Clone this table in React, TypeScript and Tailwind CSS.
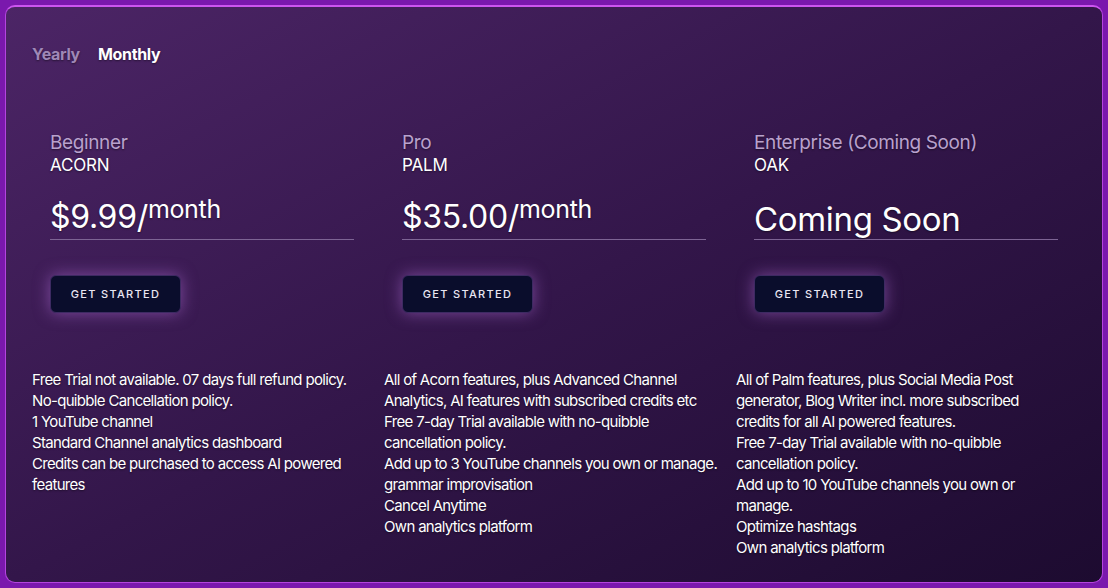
import React from "react";

const plans = [
  {
    tier: "Beginner",
    name: "ACORN",
    price: "$9.99/",
    per: "month",
    features: [
      "Free Trial not available. 07 days full refund policy.",
      "No-quibble Cancellation policy.",
      "1 YouTube channel",
      "Standard Channel analytics dashboard",
      "Credits can be purchased to access AI powered features",
    ],
  },
  {
    tier: "Pro",
    name: "PALM",
    price: "$35.00/",
    per: "month",
    features: [
      "All of Acorn features, plus Advanced Channel Analytics, AI features with subscribed credits etc",
      "Free 7-day Trial available with no-quibble cancellation policy.",
      "Add up to 3 YouTube channels you own or manage.",
      "grammar improvisation",
      "Cancel Anytime",
      "Own analytics platform",
    ],
  },
  {
    tier: "Enterprise (Coming Soon)",
    name: "OAK",
    price: "Coming Soon",
    per: "",
    features: [
      "All of Palm features, plus Social Media Post generator, Blog Writer incl. more subscribed credits for all AI powered features.",
      "Free 7-day Trial available with no-quibble cancellation policy.",
      "Add up to 10 YouTube channels you own or manage.",
      "Optimize hashtags",
      "Own analytics platform",
    ],
  },
];

export default function App() {
  return (
    <div
      className="w-[1108px] h-[588px] bg-[#7a18ad] p-[5px] overflow-hidden"
      style={{ fontFamily: "Inter, 'Noto Sans', sans-serif" }}
    >
      <div className="h-[578px] w-[1098px] rounded-[10px] border border-[#b445de] border-t-2 border-t-[#cc55f0] bg-gradient-to-br from-[#4c2566] via-[#33164a] to-[#1d0b30] pl-[26px] pr-[38px] pt-[35px] [text-shadow:0_1px_2px_rgba(0,0,0,0.45)]">
        <div className="flex gap-[18px] text-[16px] font-bold tracking-[-0.02em] h-[24px] items-center">
          <span className="text-[#9f88b6]">Yearly</span>
          <span className="text-white">Monthly</span>
        </div>
        <div className="grid grid-cols-[336px_336px_1fr] gap-x-[16px] mt-[65px]">
          {plans.map((p) => (
            <div key={p.name} className="flex flex-col">
              <div className="pl-[18px] w-[322px]">
                <div className="text-[19px] leading-[24px] text-[#b9a2cd] tracking-[-0.02em]">{p.tier}</div>
                <div className="text-[17px] leading-[20px] text-white tracking-[-0.01em]">{p.name}</div>
                <div className="mt-[20px] h-[45px] border-b border-[#7d6494] flex items-end pb-[2px] text-white">
                  {p.per ? (
                    <span className="text-[32px] leading-[36px] tracking-[-0.01em]">
                      {p.price}
                      <span className="text-[25px] relative top-[-10px]">{p.per}</span>
                    </span>
                  ) : (
                    <span className="text-[33px] leading-[36px] tracking-[-0.01em]">{p.price}</span>
                  )}
                </div>
                <button className="mt-[35px] w-[131px] h-[38px] rounded-[6px] bg-[#0a0d2c] border border-[#3d2a62] text-[11px] font-medium tracking-[0.12em] text-[#e9e6f2] shadow-[0_0_16px_rgba(190,120,230,0.5)] [text-shadow:none]">
                  GET STARTED
                </button>
              </div>
              <div className="mt-[56px] text-[15px] leading-[21px] text-white tracking-[-0.045em]">
                {p.features.map((f, i) => (
                  <div key={i}>{f}</div>
                ))}
              </div>
            </div>
          ))}
        </div>
      </div>
    </div>
  );
}
